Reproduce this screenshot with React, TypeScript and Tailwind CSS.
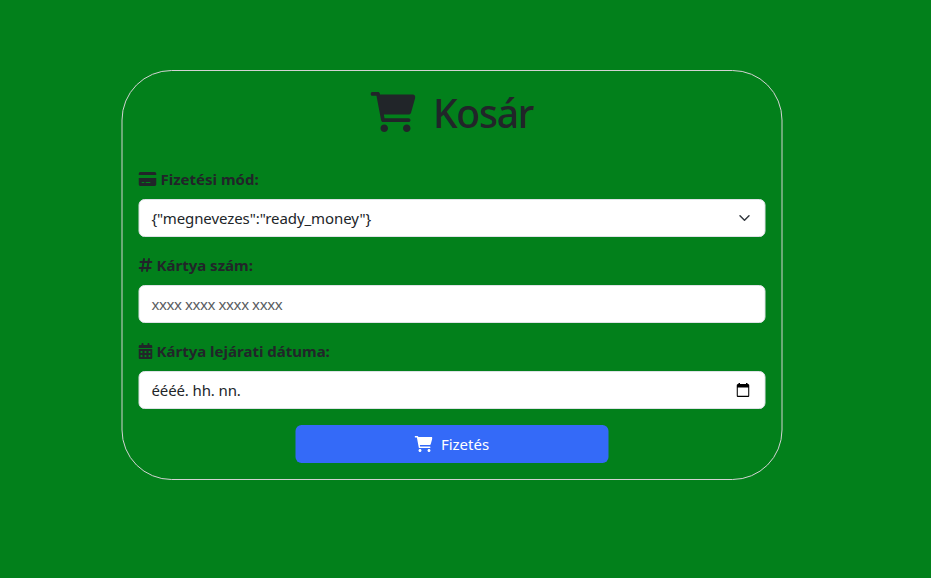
import type { ReactNode } from 'react';
import { FaCalendarDays, FaCreditCard, FaHashtag } from 'react-icons/fa6';

function CartIcon({ className }: { className: string }) {
  return (
    <svg viewBox="0 0 576 512" fill="currentColor" className={className}>
      <path d="M96 0C107.5 0 117.4 8.19 119.6 19.51L121.1 32H541.8C562.1 32 578.3 52.25 572.6 72.66L518.6 264.7C514.7 278.5 502.1 288 487.8 288H170.7L179.9 336H488C501.3 336 512 346.7 512 360C512 373.3 501.3 384 488 384H159.1C148.5 384 138.6 375.8 136.4 364.5L76.14 48H24C10.75 48 0 37.25 0 24C0 10.75 10.75 0 24 0H96zM128 464C128 437.5 149.5 416 176 416C202.5 416 224 437.5 224 464C224 490.5 202.5 512 176 512C149.5 512 128 490.5 128 464zM512 464C512 490.5 490.5 512 464 512C437.5 512 416 490.5 416 464C416 437.5 437.5 416 464 416C490.5 416 512 437.5 512 464z" />
    </svg>
  );
}

function Label({ icon, children }: { icon: ReactNode; children: ReactNode }) {
  return (
    <div className="mb-2 flex h-6 items-center gap-1 text-[15px] font-bold">
      {icon}
      {children}
    </div>
  );
}

function Field({ children }: { children: ReactNode }) {
  return (
    <div className="mb-4 flex h-[38px] items-center justify-between rounded-md border border-[#dee2e6] bg-white px-3 text-[15px]">
      {children}
    </div>
  );
}

export default function App() {
  return (
    <main className="h-[578px] w-[931px] overflow-hidden bg-[#02801b] pt-[70px] font-['Noto_Sans',sans-serif] text-base text-[#212529]">
      <section className="ml-[122px] h-[410px] w-[661px] translate-x-[-0.5px] rounded-[50px] border border-[#d3d3d3] p-4">
        <h1 className="mb-8 flex h-12 items-center justify-center gap-[17px] text-[39px] font-medium leading-none">
          <CartIcon className="h-10 w-[45px] translate-y-px" />
          <span className="translate-y-px tracking-[-1.2px]">Kosár</span>
        </h1>
        <Label icon={<FaCreditCard className="h-4 w-[18px]" />}>
          <span>Fizetési mód:</span>
        </Label>
        <Field>
          <span className="tracking-[-0.08px]">{'{"megnevezes":"ready_money"}'}</span>
          <svg className="mr-0.5 size-3" viewBox="0 0 16 16" fill="none" stroke="#343a40" strokeWidth="2" strokeLinecap="round" strokeLinejoin="round">
            <path d="m2 5 6 6 6-6" />
          </svg>
        </Field>
        <Label icon={<FaHashtag className="h-4 w-3.5" />}>
          <span>Kártya szám:</span>
        </Label>
        <Field>
          <span className="tracking-[-0.42px] text-[#595c5f]">xxxx xxxx xxxx xxxx</span>
        </Field>
        <Label icon={<FaCalendarDays className="h-4 w-3.5" />}>
          <span>Kártya lejárati dátuma:</span>
        </Label>
        <Field>
          <span className="tracking-[-0.12px]">éééé. hh. nn.</span>
          <svg className="mr-[3px] h-[15px] w-[13px]" viewBox="0 0 13 15" fill="#000">
            <path fillRule="evenodd" d="M2 0h1.5v1h6V0H11v1h.5A1.5 1.5 0 0 1 13 2.5v10a1.5 1.5 0 0 1-1.5 1.5h-10A1.5 1.5 0 0 1 0 12.5v-10A1.5 1.5 0 0 1 1.5 1H2zM1.3 4.5v8.2h10.4V4.5z" />
          </svg>
        </Field>
        <button className="mx-auto flex h-[38px] w-[313px] items-center justify-center gap-2 rounded-md bg-[#346af8] text-[15px] text-white">
          <CartIcon className="h-4 w-[18px]" />
          <span>Fizetés</span>
        </button>
      </section>
    </main>
  );
}
